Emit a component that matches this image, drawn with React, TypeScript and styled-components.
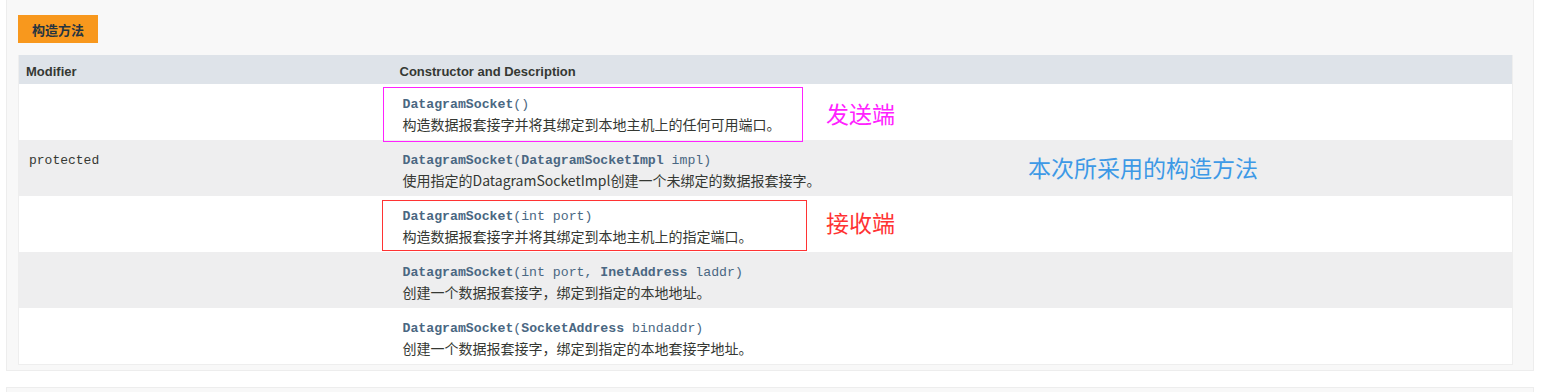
import styled, { createGlobalStyle } from "styled-components";

const GlobalStyle = createGlobalStyle`
  body {
    margin: 0;
    background: #ffffff;
    font-family: "Liberation Sans", Arial, "Noto Sans CJK SC", sans-serif;
    color: #353833;
  }
`;

const Page = styled.div`
  padding: 0 14px 0 6px;
`;

const Block = styled.section`
  background: #f8f8f8;
  border: 1px solid #ededed;
  border-top: none;
  padding: 15px 20px 5px 11px;
`;

const NextBlock = styled.section`
  margin-top: 16px;
  height: 10px;
  background: #f8f8f8;
  border: 1px solid #ededed;
  border-bottom: none;
`;

const Caption = styled.div`
  display: inline-flex;
  align-items: center;
  justify-content: center;
  width: 80px;
  height: 28px;
  background: #f8981d;
  color: #253441;
  font-size: 13px;
  font-weight: bold;
  font-family: "Noto Sans CJK SC", sans-serif;
`;

const TableWrap = styled.div`
  position: relative;
  margin-top: 12px;
`;

const Table = styled.table`
  width: 100%;
  border-collapse: collapse;
  border: 1px solid #eeeeee;
  border-top: none;
`;

const Th = styled.th<{ $first?: boolean }>`
  background: #dee3e9;
  height: 29px;
  box-sizing: border-box;
  padding: 4px 0 0 ${({ $first }) => ($first ? "7px" : "8px")};
  text-align: left;
  font-size: 13px;
  font-weight: bold;
  color: #353833;
  width: ${({ $first }) => ($first ? "373px" : "auto")};
`;

const Row = styled.tr<{ $alt?: boolean }>`
  background: ${({ $alt }) => ($alt ? "#eeeeef" : "#ffffff")};
  height: 56px;
`;

const ModCell = styled.td`
  vertical-align: top;
  padding: 14px 0 0 10px;
  font-family: "Liberation Mono", "Courier New", monospace;
  font-size: 13px;
  line-height: 14px;
  color: #353833;
`;

const DescCell = styled.td`
  vertical-align: top;
  padding: 14px 0 0 11px;
`;

const Sig = styled.div`
  font-family: "Liberation Mono", "Courier New", monospace;
  font-size: 13.2px;
  line-height: 14px;
  color: #4a6782;
`;

const Name = styled.b`
  font-weight: bold;
`;

const Desc = styled.div`
  margin-top: 2px;
  font-family: "Noto Sans CJK SC", sans-serif;
  font-size: 14px;
  line-height: 20px;
  color: #353833;
`;

const Frame = styled.div<{ $color: string; $left: number; $top: number; $w: number; $h: number }>`
  position: absolute;
  left: ${({ $left }) => $left}px;
  top: ${({ $top }) => $top}px;
  width: ${({ $w }) => $w}px;
  height: ${({ $h }) => $h}px;
  border: 1px solid ${({ $color }) => $color};
  box-sizing: border-box;
  pointer-events: none;
`;

const Note = styled.span<{ $color: string; $left: number; $top: number }>`
  position: absolute;
  left: ${({ $left }) => $left}px;
  top: ${({ $top }) => $top}px;
  color: ${({ $color }) => $color};
  font-family: "Noto Sans CJK SC", sans-serif;
  font-size: 23px;
  line-height: 30px;
  white-space: nowrap;
`;

type Ctor = {
  mod?: string;
  params: { text: string; bold?: boolean }[];
  desc: string;
};

const ctors: Ctor[] = [
  { params: [{ text: "()" }], desc: "构造数据报套接字并将其绑定到本地主机上的任何可用端口。" },
  {
    mod: "protected",
    params: [{ text: "(" }, { text: "DatagramSocketImpl", bold: true }, { text: " impl)" }],
    desc: "使用指定的DatagramSocketImpl创建一个未绑定的数据报套接字。",
  },
  { params: [{ text: "(int port)" }], desc: "构造数据报套接字并将其绑定到本地主机上的指定端口。" },
  {
    params: [{ text: "(int port, " }, { text: "InetAddress", bold: true }, { text: " laddr)" }],
    desc: "创建一个数据报套接字，绑定到指定的本地地址。",
  },
  {
    params: [{ text: "(" }, { text: "SocketAddress", bold: true }, { text: " bindaddr)" }],
    desc: "创建一个数据报套接字，绑定到指定的本地套接字地址。",
  },
];

export default function App() {
  return (
    <>
      <GlobalStyle />
      <Page>
        <Block>
          <Caption>构造方法</Caption>
          <TableWrap>
            <Table>
              <thead>
                <tr>
                  <Th $first>Modifier</Th>
                  <Th>Constructor and Description</Th>
                </tr>
              </thead>
              <tbody>
                {ctors.map((c, i) => (
                  <Row key={i} $alt={i % 2 === 1}>
                    <ModCell>{c.mod ?? ""}</ModCell>
                    <DescCell>
                      <Sig>
                        <Name>DatagramSocket</Name>
                        {c.params.map((p, j) =>
                          p.bold ? <Name key={j}>{p.text}</Name> : <span key={j}>{p.text}</span>
                        )}
                      </Sig>
                      <Desc>{c.desc}</Desc>
                    </DescCell>
                  </Row>
                ))}
              </tbody>
            </Table>

            {/* 标注 */}
            <Frame $color="#ff22ff" $left={365} $top={32} $w={420} $h={55} />
            <Note $color="#ff22ff" $left={808} $top={43}>发送端</Note>
            <Note $color="#3d99e6" $left={1010} $top={97}>本次所采用的构造方法</Note>
            <Frame $color="#ff3333" $left={364} $top={145} $w={425} $h={51} />
            <Note $color="#ff3333" $left={808} $top={152}>接收端</Note>
          </TableWrap>
        </Block>
        <NextBlock />
      </Page>
    </>
  );
}
